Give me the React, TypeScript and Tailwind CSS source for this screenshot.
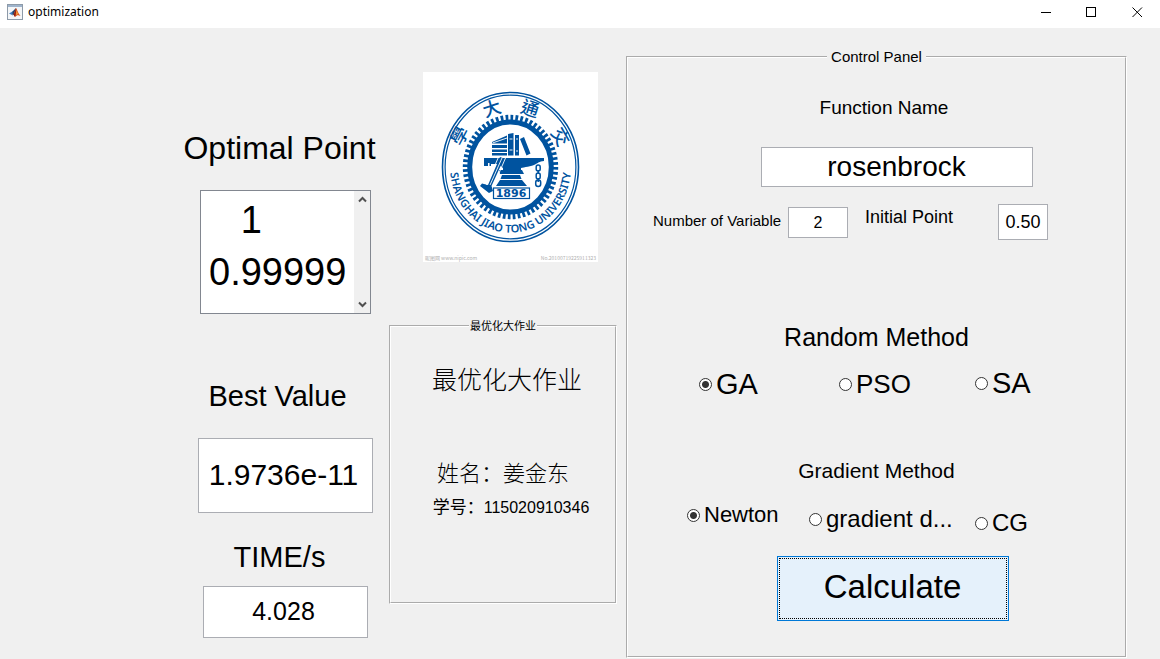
import React, { useState } from "react";

const GROOVE = "min-w-0 border-2 border-white [border-style:groove]";
const FIELD = "border border-[#abadb3] bg-white text-center text-black outline-none";

function MatlabIcon() {
  return (
    <svg width="16" height="16" viewBox="0 0 16 16" aria-hidden="true">
      <rect x="0.5" y="0.5" width="15" height="15" fill="#f4f6f8" stroke="#8d9aa8" />
      <rect x="1" y="1" width="14" height="2" fill="#9fb4cc" />
      <path d="M2 9.5 L5.5 7.5 L7 8.5 L5 11 Z" fill="#3f7fc0" />
      <path d="M5.5 7.5 L9 4 L8 10 L5.5 11.5 Z" fill="#24426b" />
      <path d="M9 4 C10 5 11 9 13.5 12 C11 10.5 10 11 8 13 L6.5 10.5 Z" fill="#d9541e" />
      <path d="M9 4 C9.5 6 9 9 8 13 L6.5 10.5 C8 9 8.5 6 9 4 Z" fill="#8c1c13" />
      <path d="M9.5 6 L11 10 L9 11 Z" fill="#f2a33a" />
    </svg>
  );
}

function Emblem() {
  return (
    <svg width="175" height="190" viewBox="0 0 175 190" className="bg-white" role="img" aria-label="Shanghai Jiao Tong University">
      <defs>
        <path id="motto" d="M27 94.7 A60.5 66 0 0 0 148 94.7" />
      </defs>
      <g fill="none" stroke="#00539f">
        <ellipse cx="87.5" cy="95" rx="68" ry="74.5" strokeWidth="1.6" />
        <ellipse cx="87.5" cy="95" rx="65.400" ry="71.800" strokeWidth="1.2" />
        <ellipse cx="87.5" cy="95" rx="40.8" ry="45" strokeWidth="5" />
        <ellipse cx="87.5" cy="95" rx="45" ry="49.500" strokeWidth="5.4" pathLength="120" strokeDasharray="1.100 0.900" />
      </g>
      <g fill="#00539f">
        <path d="M69 70 L84 63.500 V71.500 H69 Z M69 73 H84 V76 H69 Z M69 77.500 H84 V80 H69 Z M69 81 H84 V83.500 H69 Z" />
        <path d="M85 62 L90.500 61 V83.500 H85 Z M92 63 H96 V83.500 H92 Z M97 67 L101 65 L107.500 81.500 L103.500 83.500 Z" />
        <path d="M61 86 H121 V89 C116 89.500 115 91 113 92 C108 95 101 95 98 96 L98 99 H80 L80 96 L75 92 H68 V94 H66.500 V91 H65 V94 H61 Z" />
        <path d="M76 98 H99 L101 102 H77 Z M79 103 H97 L98.500 107 H77.500 Z M77 108 H99 L104 114 H73 Z" />
        <path d="M77 85 L81 86.500 L68.500 114 L70 119 L66 121 L57 114 L59 111.500 L65 113 Z" />
      </g>
      <g fill="none" stroke="#fff" strokeWidth="0.900">
        <path d="M75.500 85 L63.500 113 M82.500 86 L70 115 M79 86 L67 113 M69.500 71 L84 66 M86.500 67 H89.500 M86.500 78 H89.500 M93 67 H95 M93 79 H95" />
      </g>
      <g fill="none" stroke="#00539f" strokeWidth="1.500">
        <rect x="113.200" y="93" width="4" height="6" rx="2" />
        <path d="M115.200 98 V102 M115.200 106 V110" />
        <rect x="113.200" y="101" width="4" height="6" rx="2" />
        <rect x="112.700" y="108" width="5" height="6.500" rx="2.500" />
        <rect x="70.500" y="116" width="36" height="10.500" strokeWidth="1.200" fill="#fff" />
      </g>
      <g fill="#00539f" textAnchor="middle">
        <text x="88" y="125" className="font-['DejaVu_Sans',sans-serif] text-[11px] font-bold">1896</text>
        <text className="font-['Noto_Sans',sans-serif] text-[11px] font-semibold">
          <textPath href="#motto" startOffset="50%">SHANGHAI JIAO TONG UNIVERSITY</textPath>
        </text>
        <g className="font-['Noto_Sans_CJK_TC',sans-serif] text-[18px] font-medium">
          <text transform="translate(37 64) rotate(-62)" y="6">學</text>
          <text transform="translate(69 37) rotate(-18)" y="6">大</text>
          <text transform="translate(107 37) rotate(18)" y="6">通</text>
          <text transform="translate(137 65) rotate(60)" y="6">交</text>
        </g>
      </g>
      <g fill="#b0b0b0" className="font-['Noto_Sans_CJK_SC',sans-serif] text-[5px]">
        <text x="2" y="188">昵图网 www.nipic.com</text>
        <text x="173" y="188" textAnchor="end">No.20100719225911323</text>
      </g>
    </svg>
  );
}

function Chevron({ up = false }: { up?: boolean }) {
  return (
    <svg width="9" height="7" viewBox="0 0 9 7" aria-hidden="true" fill="none" stroke="#505050" strokeWidth="2">
      <path d={up ? "M1 5.500 L4.500 2 L8 5.500" : "M1 1.500 L4.500 5 L8 1.500"} />
    </svg>
  );
}

type RadioProps = {
  name: string;
  label: string;
  checked: boolean;
  onSelect: () => void;
  className: string;
};

function Radio({ name, label, checked, onSelect, className }: RadioProps) {
  return (
    <label className={`flex items-center gap-1 whitespace-nowrap ${className}`}>
      <input
        type="radio"
        name={name}
        checked={checked}
        onChange={onSelect}
        className="size-[13px] shrink-0 appearance-none rounded-full border border-[#333] bg-white checked:bg-[radial-gradient(circle,#333_0_3px,#fff_4px)]"
      />
      {label}
    </label>
  );
}

export default function App() {
  const [randomMethod, setRandomMethod] = useState("GA");
  const [gradientMethod, setGradientMethod] = useState("Newton");

  return (
    <div className="flex min-h-screen flex-col bg-[#f0f0f0] font-['Liberation_Sans','Noto_Sans_CJK_SC',sans-serif] text-black">
      <header className="flex h-7 items-center bg-white pb-1 pl-[7px]">
        <MatlabIcon />
        <h1 className="ml-[5px] flex-1 font-['Noto_Sans',sans-serif] text-[12px] leading-4">optimization</h1>
        <button aria-label="Minimize" className="flex h-6 w-[45px] items-center justify-center">
          <svg width="11" height="11" viewBox="0 0 11 11" stroke="#000"><path d="M0 5.500 H10" /></svg>
        </button>
        <button aria-label="Maximize" className="flex h-6 w-[45px] items-center justify-center">
          <svg width="11" height="11" viewBox="0 0 11 11" stroke="#000" fill="none"><rect x="0.500" y="0.500" width="9" height="9" /></svg>
        </button>
        <button aria-label="Close" className="flex h-6 w-[46px] items-center justify-center">
          <svg width="11" height="11" viewBox="0 0 11 11" stroke="#000"><path d="M0.500 0.500 L10 10 M10 0.500 L0.500 10" /></svg>
        </button>
      </header>

      <main className="grid grid-cols-[389fr_228fr_543fr]">
        <section className="flex flex-col items-center pt-[100px] pl-[182px]">
          <label htmlFor="point" className="pr-3 text-[32px] leading-10 whitespace-nowrap">Optimal Point</label>
          <div className="mt-[22px] flex h-[124px] w-[171px] border border-[#828790] bg-white">
            <textarea
              id="point"
              readOnly
              defaultValue={"   1\n0.99999"}
              className="block min-w-0 flex-1 resize-none overflow-hidden pt-[3px] pl-2 text-[38px] leading-[52px] whitespace-pre outline-none"
            />
            <div className="flex w-4 flex-col items-center justify-between bg-[#f0f0f0] py-[5px]">
              <button aria-label="Scroll up"><Chevron up /></button>
              <button aria-label="Scroll down"><Chevron /></button>
            </div>
          </div>
          <label htmlFor="best" className="mt-[62px] pr-4 text-[29px] leading-10 whitespace-nowrap">Best Value</label>
          <input id="best" readOnly defaultValue="1.9736e-11" className={`mt-[22px] h-[75px] w-[175px] pr-1 pb-0.5 text-[30px] ${FIELD}`} />
          <label htmlFor="time" className="mt-6 pr-3 text-[29px] leading-10 whitespace-nowrap">TIME/s</label>
          <input id="time" readOnly defaultValue="4.028" className={`mt-[9px] h-[52px] w-[165px] pr-1 pb-0.5 text-[25px] ${FIELD}`} />
        </section>

        <section className="flex flex-col pt-11">
          <div className="flex justify-center pl-[14px]">
            <Emblem />
          </div>
          <fieldset className={`mt-14 h-[286px] ${GROOVE}`}>
            <legend className="mx-auto px-px text-[11px] leading-4">最优化大作业</legend>
            <div className="flex flex-col items-center pt-7 pl-2">
              <p className="text-[25px] leading-9 font-light">最优化大作业</p>
              <p className="mt-[58px] pr-2 text-[22px] leading-9 font-light">姓名：姜金东</p>
              <p className="mt-[2px] pl-2 text-[16px] leading-7"><span className="text-[17px]">学号：</span>115020910346</p>
            </div>
          </fieldset>
        </section>

        <section className="pt-5 pr-[33px] pl-[9px]">
          <fieldset className={`pb-[35px] ${GROOVE}`}>
            <legend className="mx-auto px-1 text-[15px] leading-[18px]">Control Panel</legend>
            <div className="flex flex-col items-center pt-[30px]">
              <label htmlFor="fn" className="pl-[15px] text-[19px] leading-6">Function Name</label>
              <div className="mt-[27px] pl-10">
                <input id="fn" defaultValue="rosenbrock" className={`block h-10 w-[272px] text-[28px] ${FIELD}`} />
              </div>
            </div>
            <div className="mt-[17px] flex items-start pl-[25px]">
              <label htmlFor="vars" className="mt-2 w-[135px] text-[15px] leading-[18px] whitespace-nowrap">Number of Variable</label>
              <input id="vars" defaultValue="2" className={`mt-[3px] h-[31px] w-[60px] text-[16px] ${FIELD}`} />
              <label htmlFor="init" className="mt-px ml-[17px] w-[133px] text-[18px] leading-6 whitespace-nowrap">Initial Point</label>
              <input id="init" defaultValue="0.50" className={`h-9 w-[50px] text-[18px] ${FIELD}`} />
            </div>

            <h2 className="mt-[81px] text-center text-[25px] leading-8">Random Method</h2>
            <div role="radiogroup" aria-label="Random Method" className="mt-3 grid grid-cols-[140px_136px_1fr] items-center pl-[71px] leading-9">
              <Radio name="random" label="GA" checked={randomMethod === "GA"} onSelect={() => setRandomMethod("GA")} className="text-[29px]" />
              <Radio name="random" label="PSO" checked={randomMethod === "PSO"} onSelect={() => setRandomMethod("PSO")} className="text-[26px]" />
              <Radio name="random" label="SA" checked={randomMethod === "SA"} onSelect={() => setRandomMethod("SA")} className="pb-0.5 text-[29px]" />
            </div>

            <h2 className="mt-[52px] text-center text-[21px] leading-8">Gradient Method</h2>
            <div role="radiogroup" aria-label="Gradient Method" className="mt-3 grid grid-cols-[122px_166px_1fr] items-start pl-[59px] leading-8">
              <Radio name="gradient" label="Newton" checked={gradientMethod === "Newton"} onSelect={() => setGradientMethod("Newton")} className="text-[22px]" />
              <Radio name="gradient" label="gradient d..." checked={gradientMethod === "descent"} onSelect={() => setGradientMethod("descent")} className="mt-1 text-[24px]" />
              <Radio name="gradient" label="CG" checked={gradientMethod === "CG"} onSelect={() => setGradientMethod("CG")} className="mt-2 text-[24px]" />
            </div>

            <div className="mt-[17px] flex justify-center pl-8">
              <button className="h-[65px] w-[232px] border border-[#0078d7] bg-[#e5f1fb] p-px text-[33px]">
                <span className="flex h-full items-center justify-center border border-dotted border-black pb-1">Calculate</span>
              </button>
            </div>
          </fieldset>
        </section>
      </main>
    </div>
  );
}
